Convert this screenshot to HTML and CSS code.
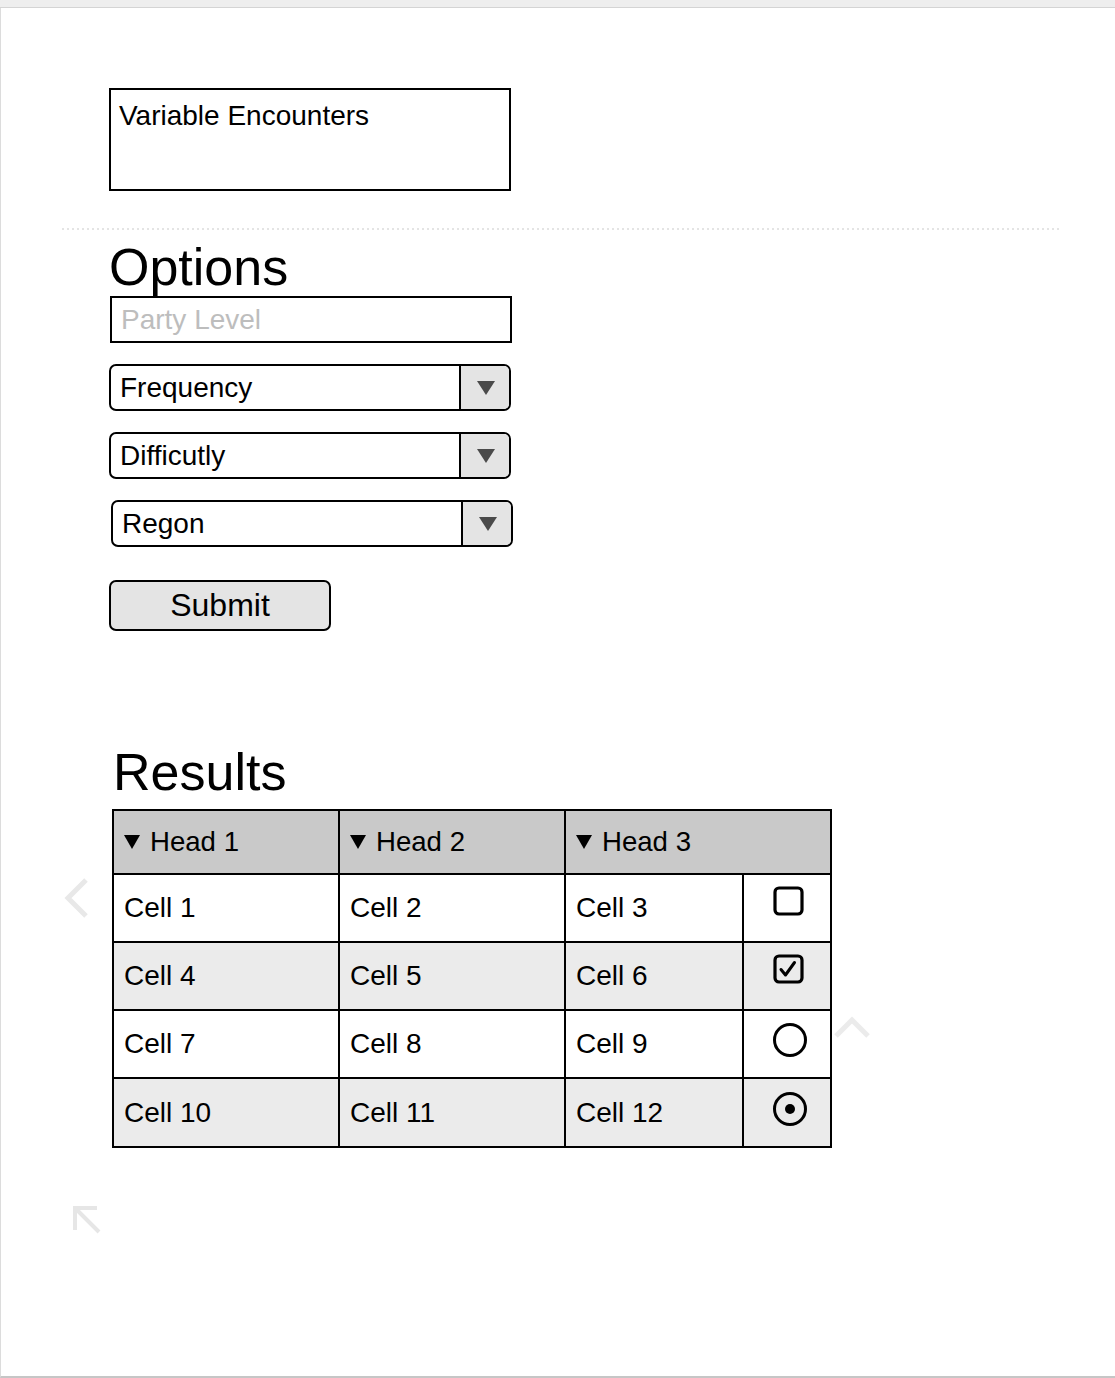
FILE: index.html
```html
<!DOCTYPE html>
<html lang="en">
<head>
<meta charset="utf-8">
<title>Variable Encounters</title>
<link rel="stylesheet" href="styles.css">
</head>
<body>
<div class="topbar"></div>
<main class="page">
  <div class="content">
    <div class="title-box">Variable Encounters</div>
    <div class="divider"></div>

    <section class="options">
      <h2 class="heading heading-options">Options</h2>
      <div class="field">Party Level</div>
      <div class="select"><span class="select-label">Frequency</span><span class="select-btn"><svg width="20" height="16" viewBox="0 0 20 16"><path d="M1 1 H19 L10 15 Z" fill="#4a4a4a"/></svg></span></div>
      <div class="select"><span class="select-label">Difficutly</span><span class="select-btn"><svg width="20" height="16" viewBox="0 0 20 16"><path d="M1 1 H19 L10 15 Z" fill="#4a4a4a"/></svg></span></div>
      <div class="select select-shift"><span class="select-label">Regon</span><span class="select-btn"><svg width="20" height="16" viewBox="0 0 20 16"><path d="M1 1 H19 L10 15 Z" fill="#4a4a4a"/></svg></span></div>
      <button class="submit" type="button">Submit</button>
    </section>

    <section class="results">
      <h2 class="heading heading-results">Results</h2>
      <div class="grid">
        <div class="cell head"><svg class="tri" width="16" height="14" viewBox="0 0 16 14"><path d="M0 0 H16 L8 14 Z" fill="#000"/></svg>Head 1</div>
        <div class="cell head"><svg class="tri" width="16" height="14" viewBox="0 0 16 14"><path d="M0 0 H16 L8 14 Z" fill="#000"/></svg>Head 2</div>
        <div class="cell head span2"><svg class="tri" width="16" height="14" viewBox="0 0 16 14"><path d="M0 0 H16 L8 14 Z" fill="#000"/></svg>Head 3</div>

        <div class="cell">Cell 1</div>
        <div class="cell">Cell 2</div>
        <div class="cell">Cell 3</div>
        <div class="cell icon icon-box"><svg width="32" height="32" viewBox="0 0 32 32"><rect x="2" y="2" width="27" height="26" rx="4" fill="none" stroke="#000" stroke-width="3.2"/></svg></div>

        <div class="cell alt">Cell 4</div>
        <div class="cell alt">Cell 5</div>
        <div class="cell alt">Cell 6</div>
        <div class="cell alt icon icon-box"><svg width="32" height="32" viewBox="0 0 32 32"><rect x="2" y="2" width="27" height="26" rx="4" fill="none" stroke="#000" stroke-width="3.2"/><path d="M8 15.5 L12.5 21 L21.5 8.5" fill="none" stroke="#000" stroke-width="3" stroke-linecap="round" stroke-linejoin="round"/></svg></div>

        <div class="cell">Cell 7</div>
        <div class="cell">Cell 8</div>
        <div class="cell">Cell 9</div>
        <div class="cell icon icon-radio"><svg width="36" height="36" viewBox="0 0 36 36"><circle cx="18" cy="18" r="15.5" fill="none" stroke="#000" stroke-width="3"/></svg></div>

        <div class="cell alt">Cell 10</div>
        <div class="cell alt">Cell 11</div>
        <div class="cell alt">Cell 12</div>
        <div class="cell alt icon icon-radio"><svg width="36" height="36" viewBox="0 0 36 36"><circle cx="18" cy="18" r="15.5" fill="none" stroke="#000" stroke-width="3"/><circle cx="18" cy="18" r="5" fill="#000"/></svg></div>
      </div>
    </section>
  </div>

  <svg class="ghost ghost-left" width="30" height="42" viewBox="0 0 30 42"><path d="M24 3 L6 21 L24 39" fill="none" stroke="#e8e8e8" stroke-width="5"/></svg>
  <svg class="ghost ghost-up" width="40" height="26" viewBox="0 0 40 26"><path d="M4 22 L20 6 L36 22" fill="none" stroke="#ebebeb" stroke-width="5"/></svg>
  <svg class="ghost ghost-diag" width="32" height="32" viewBox="0 0 32 32"><path d="M4 26 V4 H26 M5 5 L28 28" fill="none" stroke="#e6e6e6" stroke-width="4"/></svg>
</main>
</body>
</html>
```

FILE: styles.css
```css
* {
  box-sizing: border-box;
}

html, body {
  margin: 0;
  padding: 0;
  background: #ffffff;
}

body {
  font-family: "Liberation Sans", Arial, sans-serif;
  color: #000;
  width: 1115px;
  height: 1378px;
  overflow: hidden;
}

.topbar {
  height: 8px;
  background: #eeeeee;
  border-bottom: 1px solid #d4d4d4;
}

.page {
  position: relative;
  height: 1370px;
  border-left: 1px solid #dcdcdc;
  border-bottom: 2px solid #c6c6c6;
  background: #fff;
}

.content {
  padding-top: 80px;
  padding-left: 61px;
}

.title-box {
  width: 402px;
  height: 103px;
  margin-left: 47px;
  border: 2px solid #000;
  padding: 10px 0 0 8px;
  font-size: 28px;
  line-height: 31px;
}

.divider {
  width: 998px;
  height: 2px;
  margin-top: 37px;
  background-image: repeating-linear-gradient(to right, #e4e4e4 0 2px, transparent 2px 5px);
}

.heading {
  margin: 0;
  font-weight: normal;
  font-size: 52px;
  line-height: 52px;
}

.heading-options {
  margin-top: 11px;
  margin-left: 47px;
}

.field {
  display: flex;
  align-items: center;
  width: 402px;
  height: 47px;
  margin-top: 3px;
  margin-left: 48px;
  padding-left: 9px;
  border: 2px solid #000;
  font-size: 28px;
  color: #bdbdbd;
}

.select {
  display: flex;
  width: 402px;
  height: 47px;
  margin-top: 21px;
  margin-left: 47px;
  border: 2px solid #000;
  border-radius: 7px;
  overflow: hidden;
}

.select-shift {
  margin-left: 49px;
}

.select-label {
  flex: 1;
  display: flex;
  align-items: center;
  padding-left: 9px;
  font-size: 28px;
}

.select-btn {
  width: 50px;
  display: flex;
  align-items: center;
  justify-content: center;
  padding-left: 1px;
  background: #e4e4e4;
  border-left: 2px solid #000;
}

.submit {
  display: block;
  width: 222px;
  height: 51px;
  margin-top: 33px;
  margin-left: 47px;
  padding: 0;
  border: 2px solid #000;
  border-radius: 7px;
  background: #e4e4e4;
  font-family: "Liberation Sans", Arial, sans-serif;
  font-size: 32px;
  color: #000;
}

.heading-results {
  margin-top: 115px;
  margin-left: 51px;
}

.grid {
  display: grid;
  grid-template-columns: 224px 224px 176px 86px;
  grid-template-rows: 62px 66px 66px 66px 67px;
  gap: 2px;
  width: 720px;
  margin-top: 11px;
  margin-left: 50px;
  padding: 2px;
  background: #000;
}

.cell {
  display: flex;
  align-items: center;
  padding-left: 10px;
  background: #fff;
  font-size: 28px;
}

.cell.alt {
  background: #ebebeb;
}

.cell.head {
  background: #c9c9c9;
  padding-left: 10px;
  font-size: 27.6px;
}

.span2 {
  grid-column: span 2;
}

.tri {
  margin-right: 10px;
  flex: none;
}

.icon {
  justify-content: center;
  padding-left: 0;
}

.icon-box {
  padding-bottom: 12px;
  padding-left: 4px;
}

.icon-radio {
  padding-bottom: 8px;
  padding-left: 6px;
}

.ghost {
  position: absolute;
}

.ghost-left {
  left: 61px;
  top: 869px;
}

.ghost-up {
  left: 831px;
  top: 1006px;
}

.ghost-diag {
  left: 70px;
  top: 1196px;
}
```
